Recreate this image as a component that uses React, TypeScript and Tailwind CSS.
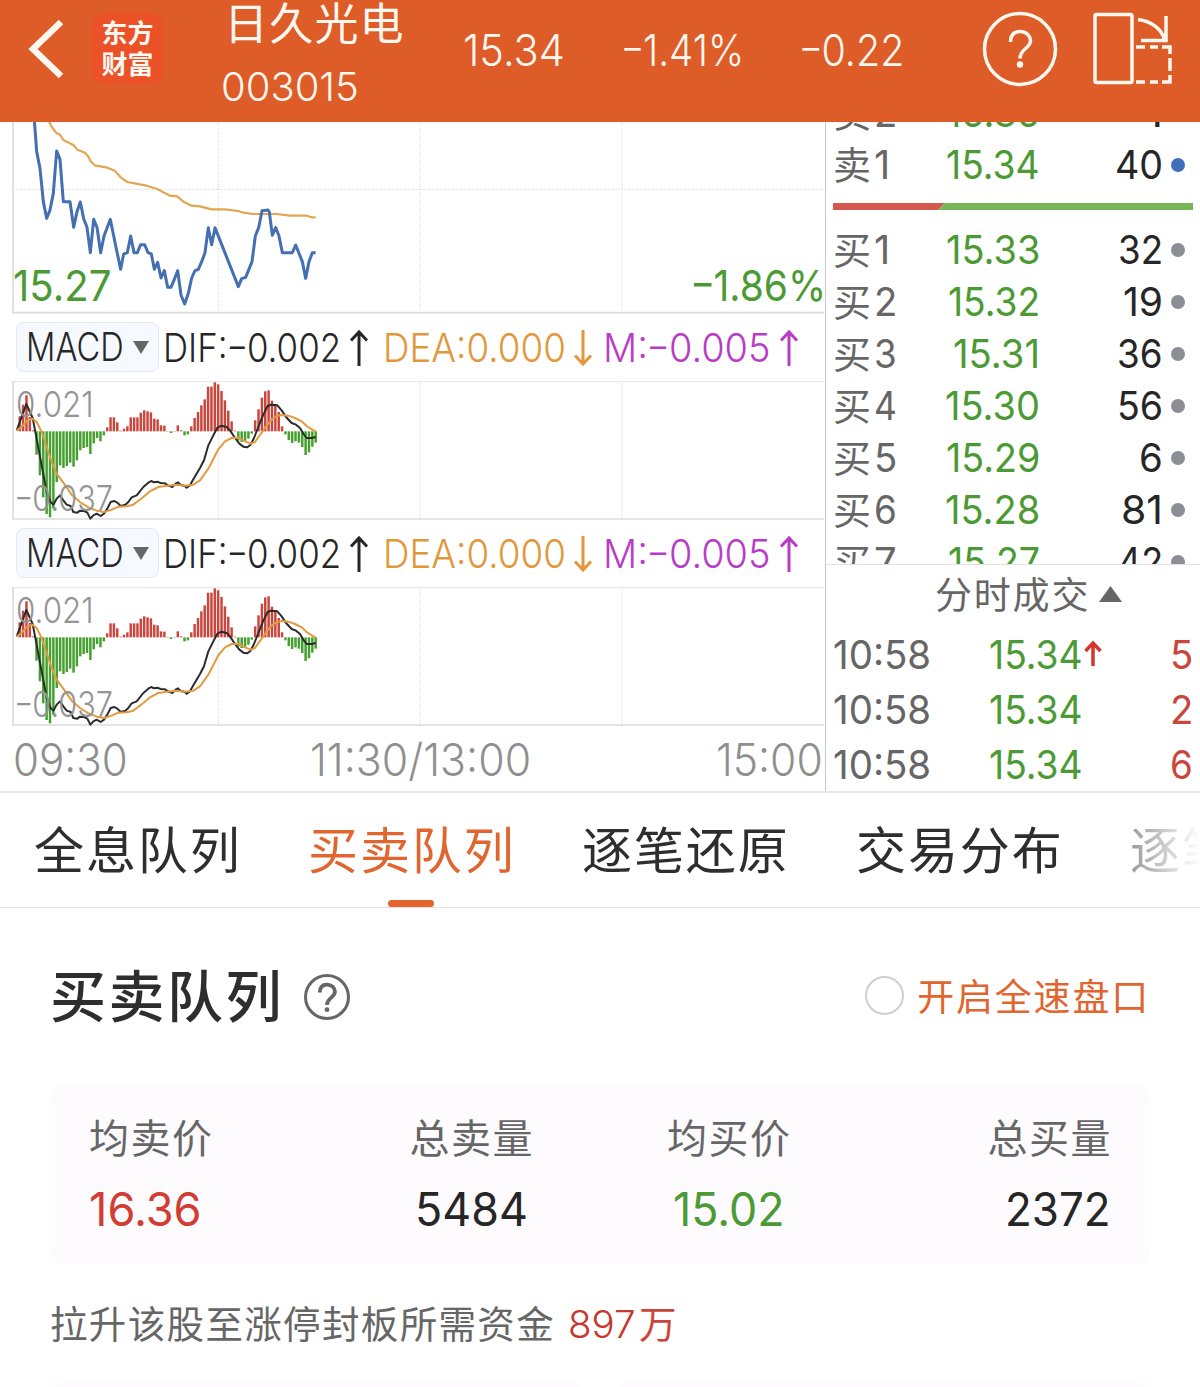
import React, { useLayoutEffect, useRef, useState } from 'react';

// Condenses latin text and numbers to a fixed width
const Fit: React.FC<{ w: number; className?: string; children: React.ReactNode }> = ({ w, className = '', children }) => {
  const ref = useRef<HTMLSpanElement>(null);
  const [scale, setScale] = useState(1);

  useLayoutEffect(() => {
    if (ref.current) setScale(w / ref.current.offsetWidth);
  }, [w]);

  return (
    <span className={`inline-block shrink-0 whitespace-nowrap ${className}`} style={{ width: w }}>
      <span ref={ref} className="inline-block origin-left" style={{ transform: `scaleX(${scale})` }}>
        {children}
      </span>
    </span>
  );
};

// Wide, slightly raised minus sign
const Minus: React.FC = () => <span className="mx-[2px] inline-block -translate-y-[0.06em] scale-x-[1.4]">-</span>;

const orders = [
  { side: '买', level: 1, price: '15.33', pw: 94, volume: '32', vw: 45 },
  { side: '买', level: 2, price: '15.32', pw: 92, volume: '19', vw: 40 },
  { side: '买', level: 3, price: '15.31', pw: 87, volume: '36', vw: 46 },
  { side: '买', level: 4, price: '15.30', pw: 95, volume: '56', vw: 46 },
  { side: '买', level: 5, price: '15.29', pw: 94, volume: '6', vw: 24 },
  { side: '买', level: 6, price: '15.28', pw: 95, volume: '81', vw: 42 },
  { side: '买', level: 7, price: '15.27', pw: 92, volume: '42', vw: 45 },
];

const trades = [
  { time: '10:58', price: '15.34', up: true, volume: 5 },
  { time: '10:58', price: '15.34', up: false, volume: 2 },
  { time: '10:58', price: '15.34', up: false, volume: 6 },
];

const tabs = ['全息队列', '买卖队列', '逐笔还原', '交易分布', '逐笔成交'];

const pricePoints =
  '103,0 110,95 120,145 130,245 140,295 150,270 160,220 170,93 180,118 190,245 210,245 221,322 231,275 241,246 251,296 261,322 271,398 281,298 291,322 302,398 312,348 331,298 346,372 362,448 371,402 382,398 392,348 402,398 412,398 422,374 434,374 444,398 454,402 463,448 473,427 483,474 493,452 503,502 513,502 523,478 533,452 543,525 554,552 565,520 575,474 585,452 595,448 605,425 615,398 625,323 635,374 645,323 715,500 725,476 737,472 756,425 766,348 776,323 786,272 804,270 808,276 817,346 827,323 837,348 847,398 877,398 887,375 907,425 917,475 927,425 937,398 947,398';

const avgPoints =
  '145,0 155,20 168,38 180,44 190,60 220,75 232,89 255,98 264,108 272,124 284,136 322,143 344,152 362,172 382,186 440,197 470,206 510,227 532,229 550,245 575,257 600,259 635,268 675,268 715,273 730,278 760,282 830,282 870,287 920,287 935,292 947,292';

const macdBars = [
  123, 88, 60, 125, 165, 238, 300, 366, 416, 426, 400, 320, 270, 278, 272, 262, 274, 255, 225, 218, 215, 236, 204, 188, 198,
  180, 156, 126, 126, 141, 166, 160, 153, 126, 126, 126, 112, 105, 108, 111, 130, 132, 150, 151, 167, 173, 167, 150, 165, 180,
  177, 153, 128, 110, 90, 72, 34, 34, 21, 27, 47, 75, 106, 138, 166, 196, 200, 196, 190, 175, 135, 102, 67, 48, 45, 76, 86,
  110, 153, 177, 194, 203, 198, 202, 215, 239, 231, 214, 202,
];

const difPoints =
  '50,165 79,86 98,128 108,180 125,270 140,350 152,380 160,388 170,370 180,360 190,375 200,388 212,392 220,410 232,412 240,406 252,407 262,412 271,430 280,420 290,415 302,422 312,415 322,400 332,380 343,377 352,382 362,392 376,388 385,380 395,366 410,360 430,335 445,322 454,317 462,321 472,319 482,323 495,324 505,331 517,335 527,325 534,321 542,329 553,331 560,337 570,330 580,312 600,278 612,255 625,210 640,180 652,157 665,151 680,155 690,165 705,188 718,205 730,214 742,216 752,208 762,188 775,155 790,118 803,92 812,88 832,90 845,105 858,125 875,143 888,148 900,158 912,178 920,188 935,188 947,185';

const deaPoints =
  '50,165 65,155 80,137 97,130 110,140 125,170 140,215 155,260 170,295 190,322 215,358 240,380 265,396 290,406 312,410 335,403 355,394 380,393 400,388 430,365 450,348 475,335 500,331 530,328 555,331 580,328 600,315 625,280 655,222 675,198 695,188 715,187 735,198 752,205 765,200 785,172 800,150 815,133 830,122 845,119 865,121 885,128 905,138 920,152 935,162 947,168';

const GridLines: React.FC = () => (
  <g stroke="#cfcfcf" strokeWidth="3" strokeDasharray="3 5">
    {[655, 1260, 1866].map(x => (
      <line key={x} x1={x} x2={x} y1="0" y2="600" />
    ))}
  </g>
);

const PriceChart: React.FC = () => (
  <div className="relative h-[192px]">
    <svg className="block" width="825" height="192" viewBox="0 6 2475 576">
      <GridLines />
      <line x1="40" x2="2472" y1="208" y2="208" stroke="#cfcfcf" strokeWidth="3" strokeDasharray="3 5" />
      <path d="M39 0V578H2472" fill="none" stroke="#dcdcdc" strokeWidth="5" />
      <polyline points={avgPoints} fill="none" stroke="#e2a552" strokeWidth="6.5" strokeLinejoin="round" />
      <polyline points={pricePoints} fill="none" stroke="#456fb3" strokeWidth="9" strokeLinejoin="round" />
    </svg>
    <Fit w={98} className="absolute left-[13px] top-[137px] text-[43px] leading-[52px] text-[#4b9a33]">15.27</Fit>
    <Fit w={134} className="absolute left-[692px] top-[137px] text-[43px] leading-[52px] text-[#4b9a33]"><Minus />1.86%</Fit>
  </div>
);

const Arrow: React.FC<{ down?: boolean; className: string }> = ({ down, className }) => (
  <svg className={className} width="20" height="38" viewBox="0 0 20 38" fill="none" stroke="currentColor" strokeWidth="3">
    <path d={down ? 'M10 1V35M2 26.5L10 35L18 26.5' : 'M10 37V3M2 11.5L10 3L18 11.5'} />
  </svg>
);

const MacdPanel: React.FC = () => (
  <div>
    <div className="flex h-[67px] items-center pl-4 text-[40px] font-light leading-none text-[#262626]">
      <div className="mb-px flex h-[50px] w-[143px] items-center rounded-lg border border-[#e6e8ef] bg-[#f6f9ff] pl-[9px]">
        <Fit w={98}>MACD</Fit>
        <svg className="ml-[9px]" width="16" height="13" viewBox="0 0 16 13" fill="#666"><path d="M0 0H16L8 13Z" /></svg>
      </div>
      <Fit w={178} className="ml-[4px]">DIF:<Minus />0.002</Fit>
      <Arrow className="ml-2" />
      <Fit w={183} className="ml-[14px] text-[#e2983a]">DEA:0.000</Fit>
      <Arrow down className="ml-[7px] text-[#e2983a]" />
      <Fit w={168} className="ml-[10px] text-[#b83cc8]">M:<Minus />0.005</Fit>
      <Arrow className="ml-[8px] text-[#b83cc8]" />
    </div>
    <div className="relative h-[139px]">
      <svg className="block" width="825" height="139" viewBox="0 17 2475 417">
        <GridLines />
        <line x1="36" x2="2472" y1="19" y2="19" stroke="#e4e4e4" strokeWidth="3" />
        <path d="M39 18V431H2472" fill="none" stroke="#dcdcdc" strokeWidth="5" />
        {macdBars.map((y, i) => (
          <rect
            key={i}
            x={55.5 + i * 10.09}
            y={Math.min(y, 168)}
            width="7.4"
            height={Math.abs(y - 168)}
            fill={y < 168 ? '#c9463d' : '#46a030'}
          />
        ))}
        <polyline points={difPoints} fill="none" stroke="#2b2b2b" strokeWidth="6" strokeLinejoin="round" />
        <polyline points={deaPoints} fill="none" stroke="#e29b40" strokeWidth="6" strokeLinejoin="round" />
      </svg>
      <Fit w={78} className="absolute left-4 top-[2px] text-[35px] font-light leading-[42px] text-[#949494]">0.021</Fit>
      <Fit w={98} className="absolute left-[15px] top-[96px] text-[35px] font-light leading-[42px] text-[#949494]"><Minus />0.037</Fit>
    </div>
  </div>
);

const OrderRow: React.FC<{ side: string; level: number; price: string; pw: number; volume: string; vw: number; active?: boolean }> = ({
  side, level, price, pw, volume, vw, active,
}) => (
  <div className="flex h-[52px] shrink-0 items-center text-[40px] leading-none">
    <span className="w-[41px] text-[38px] text-[#666]">{side}</span>
    <Fit w={level === 1 ? 16 : 23} className="text-[#666]">{level}</Fit>
    <span className="ml-auto text-[#4b9a33]"><Fit w={pw}>{price}</Fit></span>
    <span className="flex w-[123px] justify-end text-[#262626]"><Fit w={vw}>{volume}</Fit></span>
    <span className={`ml-2 mr-[15px] size-[14px] rounded-full ${active ? 'bg-[#426fba]' : 'bg-[#8d8d94]'}`} />
  </div>
);

const HelpIcon: React.FC<{ size: number; stroke: number; mark?: string; className?: string }> = ({ size, stroke, mark, className }) => (
  <svg className={className} width={size} height={size} viewBox="0 0 76 76" fill="none" stroke="currentColor" strokeWidth={stroke}>
    <circle cx="38" cy="38" r="35.5" />
    <g transform={mark}>
      <path d="M28.5 31C28.5 24 32 20.5 38 20.5S48.5 24.5 48.5 30C48.5 37 38 38 38 47.5" />
      <circle cx="38" cy="53.5" r="3.2" fill="currentColor" stroke="none" />
    </g>
  </svg>
);

const Header: React.FC = () => (
  <header className="flex h-[122px] shrink-0 bg-[#dd5c28] text-[#fff8f0]">
    <svg className="ml-[26px] mt-[17px]" width="40" height="64" viewBox="0 0 40 64" fill="none" stroke="currentColor" strokeWidth="6.5">
      <path d="M35 5L7 32L35 59" />
    </svg>
    <div className="ml-[26px] mt-[13px] flex h-[71px] w-[71px] flex-col items-center justify-center rounded-xl bg-[#eb5228] text-[26px] font-bold leading-[31px]">
      <span>东方</span>
      <span>财富</span>
    </div>
    <div className="ml-[58px] flex w-[242px] flex-col">
      <span className="h-[48px] pl-[3px] text-[44px] leading-[48px] tracking-[1.2px]">日久光电</span>
      <Fit w={138} className="mt-[15px] text-[40px] font-light leading-[48px]">003015</Fit>
    </div>
    <div className="flex h-[99px] items-center text-[44px] font-light leading-none">
      <Fit w={102}>15.34</Fit>
      <Fit w={122} className="ml-[57px]"><Minus />1.41%</Fit>
      <Fit w={104} className="ml-[56px]"><Minus />0.22</Fit>
    </div>
    <HelpIcon size={76} stroke={3.5} className="ml-[78px] mt-[11px]" />
    <svg className="ml-[34px] mt-[11px]" width="82" height="76" viewBox="0 0 82 76" fill="none" stroke="currentColor" strokeWidth="3.5">
      <rect x="3" y="3.5" width="37" height="68" rx="1.5" />
      <path d="M46 8.5C59 10 70 18 72.5 29M74 5V29.5H49" />
      <path d="M44 36H53M58 36H66M70 36H78V43M78 47V60M78 64V71H70M66 71H58M53 71H44" />
    </svg>
  </header>
);

const Stat: React.FC<{ label: string; value: string; w: number; className: string; align?: string }> = ({
  label, value, w, className, align = 'items-center',
}) => (
  <div className={`flex flex-col ${align}`}>
    <span className="-mr-[1px] text-[40px] leading-[56px] tracking-[1.5px] text-[#666]">{label}</span>
    <Fit w={w} className={`mt-[14px] text-[46px] leading-[56px] ${className}`}>{value}</Fit>
  </div>
);

export default function App() {
  return (
    <div className="flex h-[1387px] w-[1200px] flex-col overflow-hidden bg-white font-['Inter','Noto_Sans_CJK_SC',sans-serif]">
      <Header />

      <main className="flex h-[671px] shrink-0 border-b-2 border-[#e8e8e8]">
        <section className="w-[825px] shrink-0">
          <PriceChart />
          <MacdPanel />
          <MacdPanel />
          <div className="flex h-[66px] items-center pl-[13px] pr-[2px] text-[45px] font-light leading-none text-[#8f8f8f]">
            <Fit w={115}>09:30</Fit>
            <Fit w={221} className="ml-[182px]">11:30/13:00</Fit>
            <Fit w={107} className="ml-auto">15:00</Fit>
          </div>
        </section>

        <section className="w-[375px] shrink-0 border-l border-[#c8c8c8]">
          <div className="flex h-[443px] flex-col overflow-hidden border-b border-[#e2e2e2] pl-[7px]">
            <div className="-mt-[35px]">
              <OrderRow side="卖" level={2} price="15.35" pw={94} volume="1" vw={18} />
            </div>
            <OrderRow side="卖" level={1} price="15.34" pw={94} volume="40" vw={48} active />
            <svg className="my-3 shrink-0" width="360" height="7" viewBox="0 0 360 7">
              <path d="M0 0H112L105 7H0Z" fill="#d6574c" />
              <path d="M112 0H360V7H105Z" fill="#76b657" />
            </svg>
            <div className="mt-[2px]">
              {orders.map(order => (
                <OrderRow key={order.level} {...order} />
              ))}
            </div>
          </div>
          <div className="flex h-[62px] items-center pl-[109px] text-[37px] tracking-[1.8px] text-[#666]">
            分时成交
            <svg className="mb-[5px] ml-[9px]" width="23" height="16" viewBox="0 0 23 16" fill="#666"><path d="M11.5 0L23 16H0Z" /></svg>
          </div>
          {trades.map((trade, i) => (
            <div key={i} className="flex h-[55px] items-center pl-[7px] pr-[7px] text-[40px] leading-none text-[#666]">
              <Fit w={98}>{trade.time}</Fit>
              <Fit w={94} className="ml-[58px] text-[#4b9a33]">{trade.price}</Fit>
              {trade.up && (
                <svg className="mb-1 ml-[1px]" width="18" height="26" viewBox="0 0 18 26" fill="none" stroke="#d2372a" strokeWidth="3.5">
                  <path d="M9 26V3M1.5 11L9 3L16.5 11" />
                </svg>
              )}
              <Fit w={23} className="ml-auto text-[#c9463d]">{trade.volume}</Fit>
            </div>
          ))}
        </section>
      </main>

      <nav className="relative flex h-[115px] shrink-0 gap-[70px] overflow-hidden border-b border-[#e4e4e4] pl-[34px]">
        {tabs.map((tab, i) => (
          <div key={i} className="relative w-[204px] shrink-0">
            <span className={`block whitespace-nowrap text-[50px] leading-[117px] tracking-[1.9px] ${i === 1 ? 'text-[#e0652f]' : 'text-[#2e2e2e]'}`}>
              {tab}
            </span>
            {i === 1 && <span className="absolute bottom-0 left-[80px] h-[7px] w-[46px] rounded-full bg-[#e4642e]" />}
          </div>
        ))}
        <div className="absolute right-0 top-0 h-[110px] w-[80px] bg-gradient-to-r from-white/45 to-white" />
      </nav>

      <section className="px-[50px] pt-[49px]">
        <div className="flex h-[80px] items-center">
          <h2 className="text-[56px] font-medium leading-none tracking-[2.5px] text-[#2e2e2e]">买卖队列</h2>
          <HelpIcon size={46} stroke={5} mark="translate(-9.5 -8) scale(1.25)" className="ml-[20px] text-[#666]" />
          <span className="mb-[3px] ml-auto size-[39px] rounded-full border-2 border-[#cfcfd2]" />
          <span className="ml-[13px] text-[37px] leading-none tracking-[1.8px] text-[#e0652f]">开启全速盘口</span>
        </div>

        <div className="mt-[48px] flex h-[180px] gap-[134px] rounded-2xl bg-[#fdfbfe] px-[39px] pt-[26px]">
          <div className="flex flex-1 justify-between">
            <Stat label="均卖价" value="16.36" w={113} className="text-[#d13d33]" align="items-start" />
            <Stat label="总卖量" value="5484" w={113} className="text-[#262626]" />
          </div>
          <div className="flex flex-1 justify-between">
            <Stat label="均买价" value="15.02" w={112} className="text-[#4b9a33]" />
            <Stat label="总买量" value="2372" w={106} className="text-[#262626]" align="items-end" />
          </div>
        </div>

        <div className="mt-[31px] flex h-[58px] items-center text-[37.5px] leading-none text-[#666]">
          <span className="tracking-[1.35px]">拉升该股至涨停封板所需资金</span>
          <Fit w={68} className="ml-[13px] font-light text-[#c9362d]">897</Fit>
          <span className="ml-[3px] text-[#c9463d]">万</span>
        </div>

        <div className="mt-[26px] flex gap-[30px]">
          <div className="h-[120px] flex-1 rounded-2xl bg-[#fdfbfe]" />
          <div className="h-[120px] flex-1 rounded-2xl bg-[#fdfbfe]" />
        </div>
      </section>
    </div>
  );
}
